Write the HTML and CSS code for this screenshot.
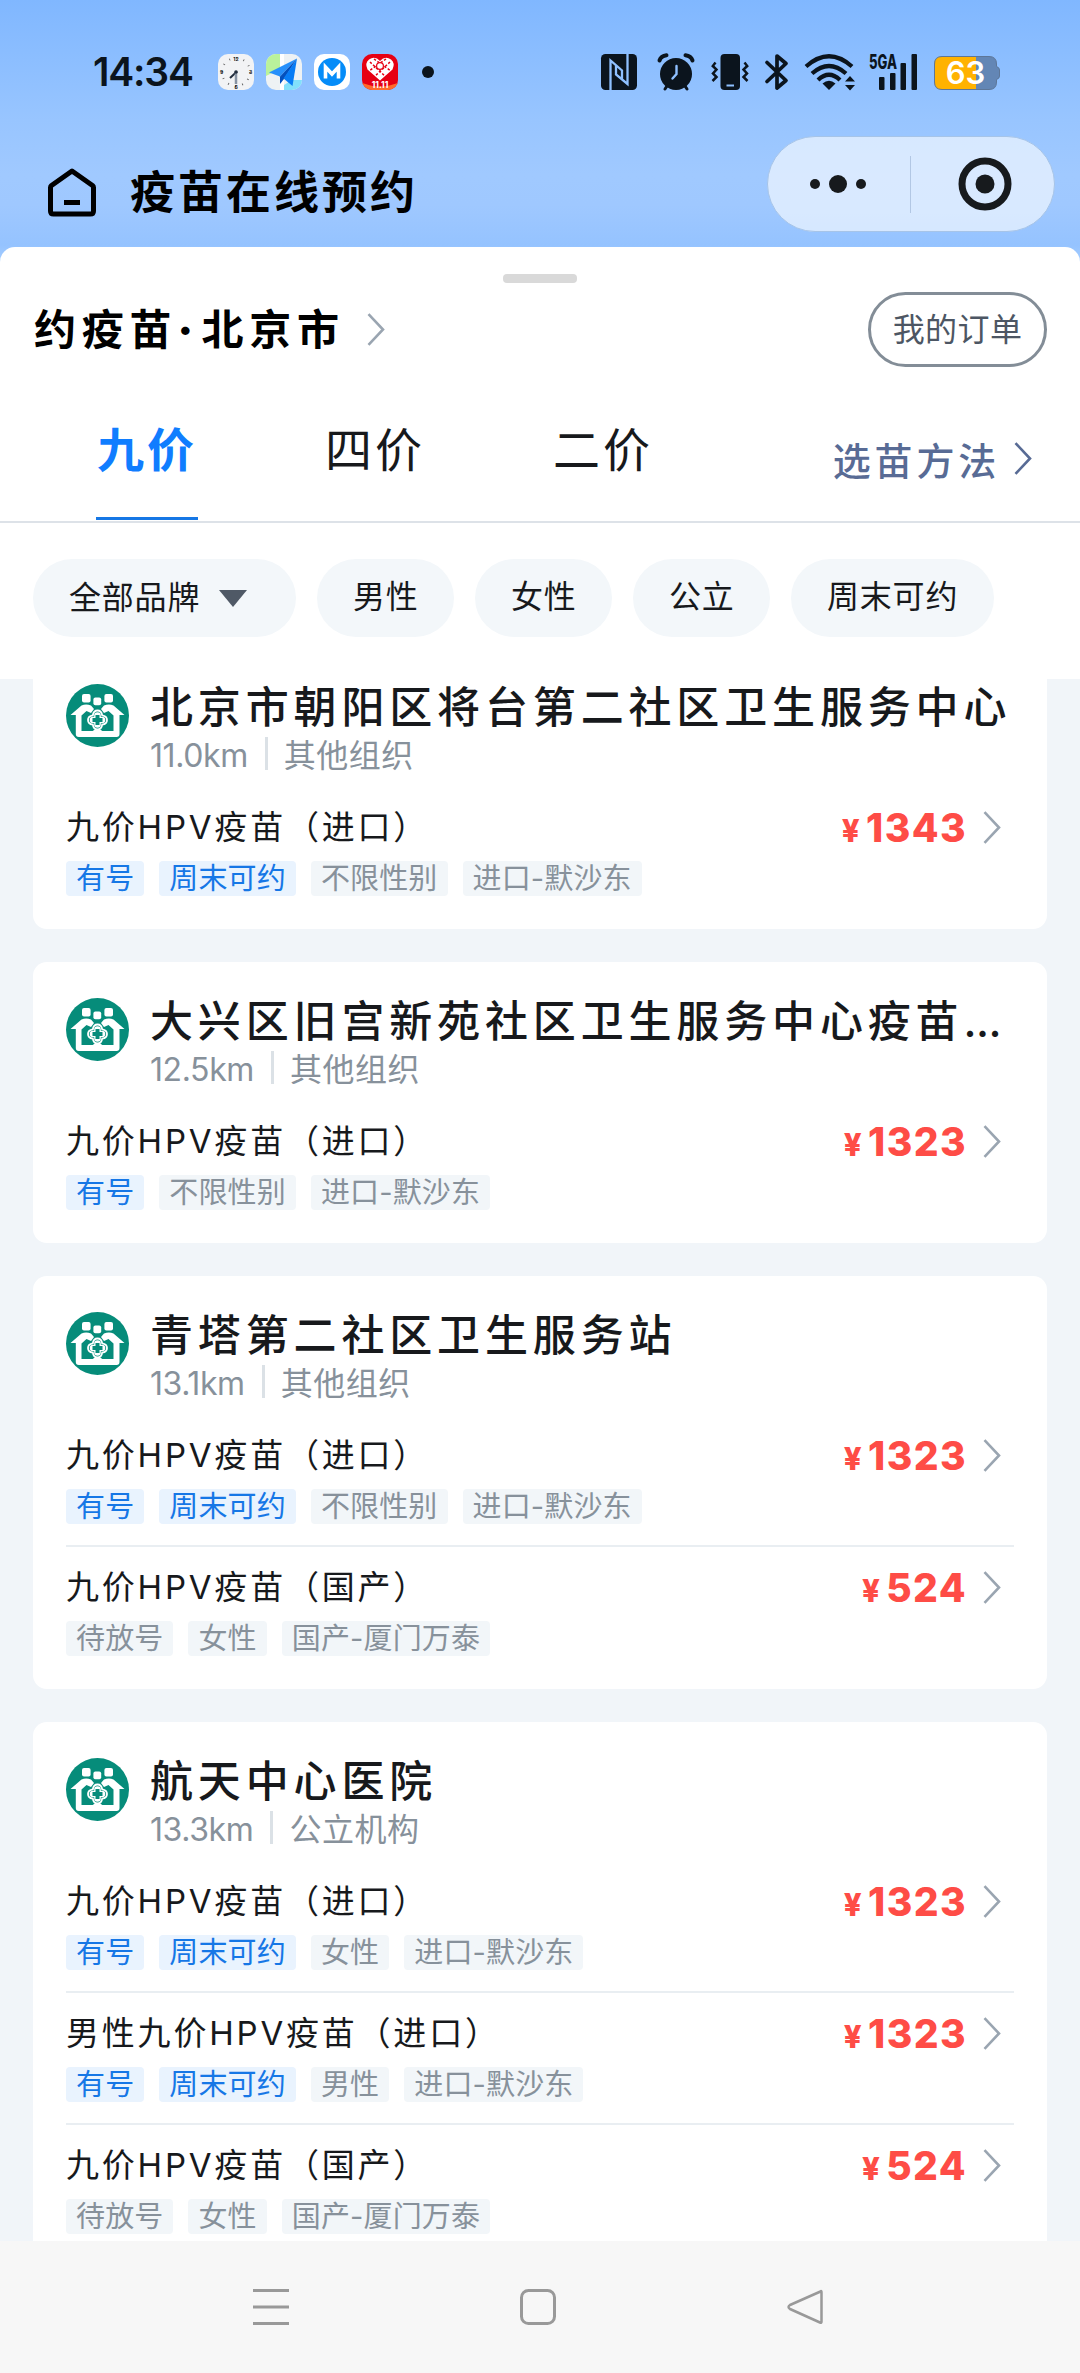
FILE: index.html
```html
<!DOCTYPE html>
<html lang="zh-CN">
<head>
<meta charset="utf-8">
<title>疫苗在线预约</title>
<link rel="stylesheet" href="styles.css">
</head>
<body>
<svg class="defs" width="0" height="0">
  <symbol id="chev" viewBox="0 0 18 33"><path d="M1.5 1.2 L16 16.5 L1.5 31.8" fill="none" stroke="currentColor" stroke-width="2.6"/></symbol>
  <symbol id="clinic" viewBox="0 0 63 63">
    <circle cx="31.5" cy="31.5" r="31.5" fill="#068c7a"/>
    <g fill="#fff">
      <rect x="16" y="10" width="8.6" height="8.6" rx="2"/>
      <rect x="27.4" y="13.500" width="7.8" height="7.8" rx="2"/>
      <rect x="38.4" y="10" width="8.6" height="8.6" rx="2"/>
      <path d="M4.5 31 L15.5 21.500 Q20 19.500 25 21.500 L28 25 L25 29 L20.500 27 L15.500 31.500 V47 H47.500 V31.500 L42.500 27 L38 29 L35 25 L38 21.500 Q43 19.500 47.500 21.500 L58.5 31 H53.500 V50 Q53.5 53 50.5 53 H12.8 Q9.8 53 9.8 50 V31 Z"/>
      <path d="M26 47.500 L31.500 43.500 L37 47.500 Z"/>
    </g>
    <path d="M31.5 26.500 Q35.500 26.500 36.200 31.300 Q41 32 41 36 Q41 40 36.200 40.700 Q35.500 45.500 31.5 45.500 Q27.500 45.500 26.800 40.700 Q22 40 22 36 Q22 32 26.800 31.300 Q27.500 26.500 31.500 26.500 Z" fill="#068c7a" stroke="#fff" stroke-width="1.800"/>
    <path d="M31.500 31.500 V40.500 M27 36 H36" stroke="#fff" stroke-width="6.600" stroke-linecap="round"/>
    <path d="M31.500 31 V41 M26.500 36 H36.500" stroke="#068c7a" stroke-width="4"/>
  </symbol>
</svg>

<header class="top">
  <div class="status">
    <span class="clock">14:34</span>
    <div class="apps">
      <svg width="36" height="36" viewBox="0 0 36 36">
        <rect width="36" height="36" rx="10" fill="#f2f3f5"/>
        <circle cx="18" cy="18" r="14" fill="none" stroke="#555" stroke-width="2" stroke-dasharray=".8 6.530"/>
        <g class="dial"><text x="18" y="6.500">12</text><text x="32.500" y="20">3</text><text x="3.500" y="20">9</text><text x="18" y="34.500">6</text></g>
        <path d="M19 17.500 L12 24" stroke="#222d3d" stroke-width="2"/><path d="M18 18 V30" stroke="#8793a3" stroke-width="2.500"/><circle cx="18" cy="18" r="1.800" fill="#222d3d"/>
      </svg>
      <svg width="36" height="36" viewBox="0 0 36 36">
        <clipPath id="mapclip"><rect width="36" height="36" rx="10"/></clipPath>
        <g clip-path="url(#mapclip)">
          <rect width="36" height="36" fill="#eef2f4"/>
          <path d="M0 0 H14 V15 L0 22 Z" fill="#baf29b"/><path d="M26 26 H36 V36 H18 V31 Z" fill="#82e0fb"/>
          <path d="M16 0 V36" stroke="#fff" stroke-width="4"/>
          <path d="M31 4.500 L3 18.500 L14 22.500 Z" fill="#2790fb"/><path d="M31 4.500 L14 22.500 V30 L18 25 Z" fill="#0450bd"/><path d="M31 4.500 L17.500 24.500 L26.500 32 Z" fill="#087cf5"/>
        </g>
      </svg>
      <svg width="36" height="36" viewBox="0 0 36 36">
        <rect width="36" height="36" rx="10" fill="#fff"/><circle cx="18" cy="18" r="14" fill="#058cf8"/>
        <path d="M11.500 24.500 V13 L18 20 L24.500 13 V24.500" fill="none" stroke="#fff" stroke-width="3.600"/>
      </svg>
      <svg width="36" height="36" viewBox="0 0 36 36">
        <clipPath id="saleclip"><rect width="36" height="36" rx="10"/></clipPath>
        <g clip-path="url(#saleclip)">
          <rect width="36" height="36" fill="#e60012"/><path d="M0 29 Q18 36 36 29 V36 H0 Z" fill="#ff6a2a"/>
          <path d="M18 26.500 L5.500 15.500 Q2.500 9 7 5.500 Q13 1.500 18 7 Q23 1.500 29 5.500 Q33.500 9 30.500 15.500 Z" fill="#fff"/>
          <path d="M8 8 L25 24 M12 5 L29 17 M28 8 L11 24 M24 5 L7 17" stroke="#e60012" stroke-width="1.500" stroke-dasharray="2.400 1.800"/>
          <circle cx="18" cy="12" r="3.400" fill="#fff" stroke="#e60012" stroke-width="1.200"/>
        </g>
        <text class="sale" x="18" y="34">11.11</text>
      </svg>
    </div>
    <i class="more"></i>
    <div class="signals">
      <svg class="nfc" width="36" height="36" viewBox="0 0 36 36"><rect width="36" height="36" rx="4.500" fill="#0b141d"/><path d="M9.500 36 V6.500 L21 16.500 V25 M26.500 0 V30 L15 20.500 V11.500" fill="none" stroke="#8fc0ff" stroke-width="2.300"/></svg>
      <svg class="alarm" width="38" height="38" viewBox="0 0 38 38"><g fill="none" stroke="#0b141d" stroke-width="4" stroke-linecap="round"><path d="M2.500 7.500 Q4 3 9.500 2.300 M35.500 7.500 Q34 3 28.500 2.300"/><path d="M10 33 L8 36 M28 33 L30 36" stroke-width="3"/></g><circle cx="19" cy="21" r="16" fill="#0b141d"/><path d="M19.500 13 V21 L15.500 25.500" fill="none" stroke="#8fc0ff" stroke-width="2.400" stroke-linecap="round"/></svg>
      <svg class="vibe" width="38" height="36" viewBox="0 0 38 36"><rect x="9.500" width="19.500" height="36" rx="4" fill="#0b141d"/><path d="M15.500 31.500 H23" stroke="#8fc0ff" stroke-width="2"/><path d="M4.500 8.500 L1.800 12 L5.500 15.500 L2 19.500 L5.500 23 L1.500 27 M33.500 8.500 L36.200 12 L32.500 15.500 L36 19.500 L32.500 23 L36.500 27" fill="none" stroke="#0b141d" stroke-width="2.500"/></svg>
      <svg class="bt" width="24" height="38" viewBox="0 0 24 38"><path d="M2 9.500 L21 27.500 L12 35 V3 L21 10.500 L2 28.500" fill="none" stroke="#0b141d" stroke-width="3.700" stroke-linejoin="round" stroke-linecap="round"/></svg>
      <svg class="wifi" width="52" height="37" viewBox="0 0 52 37"><g fill="none" stroke="#0b141d" stroke-width="4.200"><path d="M2 12.500 Q25 -8 48 12.500"/><path d="M8 19.500 Q25 4.500 42 19.500"/><path d="M14 26 Q25 15.500 36 26"/></g><path d="M18.500 29.500 Q25 24 31.500 29.500 L25 36 Z" fill="#0b141d"/><path d="M41 27.500 L46 22 L51 27.500 Z M41 31 H51 L46 36.500 Z" fill="#0b141d"/></svg>
      <svg class="cell" width="49" height="38" viewBox="0 0 49 38"><text class="net" x="0" y="16" textLength="28" lengthAdjust="spacingAndGlyphs">5GA</text><g fill="#0b141d"><rect x="10" y="24" width="5.500" height="13" rx="1"/><rect x="21" y="20" width="5.500" height="17" rx="1"/><rect x="31.500" y="10" width="5.500" height="27" rx="1"/><rect x="42.500" y="1" width="5.500" height="36" rx="1"/></g></svg>
      <svg class="batt" width="66" height="34" viewBox="0 0 66 34"><clipPath id="bclip"><path d="M8 .5 H55 Q62.500 .5 62.500 8 V10.500 Q65.500 11.500 65.500 14 V20 Q65.500 22.500 62.500 23.500 V26 Q62.500 33.500 55 33.500 H8 Q.5 33.500 .5 26 V8 Q.5 .5 8 .5 Z"/></clipPath><g clip-path="url(#bclip)"><rect width="66" height="34" fill="#6386b5"/><rect width="42" height="34" fill="#ffb200"/></g><path d="M8 .5 H55 Q62.500 .5 62.500 8 V10.500 Q65.500 11.500 65.500 14 V20 Q65.500 22.500 62.500 23.500 V26 Q62.500 33.500 55 33.500 H8 Q.5 33.500 .5 26 V8 Q.5 .5 8 .5 Z" fill="none" stroke="#5d7698" stroke-width="1"/><text class="pct" x="31.500" y="28">63</text></svg>
    </div>
  </div>
  <div class="nav">
    <svg class="home" width="48" height="49" viewBox="0 0 48 49"><path d="M24 3 L44.500 17.500 Q45.500 18.300 45.500 19.500 V43 Q45.500 46 42.500 46 H5.500 Q2.500 46 2.500 43 V19.500 Q2.500 18.300 3.500 17.500 Z" fill="none" stroke="#000" stroke-width="5" stroke-linejoin="round"/><path d="M16 34.500 H32" stroke="#000" stroke-width="5"/></svg>
    <h1>疫苗在线预约</h1>
    <div class="capsule">
      <svg width="56" height="22" viewBox="0 0 56 22" fill="#171a1d"><circle cx="5" cy="11" r="5"/><circle cx="28" cy="11" r="9"/><circle cx="51" cy="11" r="5"/></svg>
      <i></i>
      <svg width="54" height="54" viewBox="0 0 54 54"><circle cx="27" cy="27" r="23" fill="none" stroke="#171a1d" stroke-width="7"/><circle cx="27" cy="27" r="9.500" fill="#171a1d"/></svg>
    </div>
  </div>
</header>

<main class="sheet">
  <div class="handle"></div>
  <div class="city">
    <h2><span>约疫苗</span><b>·</b><span>北京市</span></h2>
    <svg class="chev"><use href="#chev"/></svg>
    <span class="orders">我的订单</span>
  </div>
  <div class="tabs">
    <span class="tab on">九价</span><span class="tab">四价</span><span class="tab">二价</span>
    <span class="how">选苗方法<svg class="chev"><use href="#chev"/></svg></span>
  </div>
  <div class="chips">
    <span class="brand">全部品牌<i></i></span><span>男性</span><span>女性</span><span>公立</span><span>周末可约</span>
  </div>
  <div class="list">
    <section class="card">
      <div class="org"><svg class="logo"><use href="#clinic"/></svg><div><h3>北京市朝阳区将台第二社区卫生服务中心</h3><p><span>11.0km</span><i></i>其他组织</p></div></div>
      <div class="item"><div class="line"><span class="name">九价HPV疫苗（进口）</span><span class="price"><small>¥</small>1343</span><svg class="chev"><use href="#chev"/></svg></div><div class="tags"><b>有号</b><b>周末可约</b><span>不限性别</span><span>进口-默沙东</span></div></div>
    </section>
    <section class="card">
      <div class="org"><svg class="logo"><use href="#clinic"/></svg><div><h3>大兴区旧宫新苑社区卫生服务中心疫苗<span class="dots">...</span></h3><p><span>12.5km</span><i></i>其他组织</p></div></div>
      <div class="item"><div class="line"><span class="name">九价HPV疫苗（进口）</span><span class="price"><small>¥</small>1323</span><svg class="chev"><use href="#chev"/></svg></div><div class="tags"><b>有号</b><span>不限性别</span><span>进口-默沙东</span></div></div>
    </section>
    <section class="card">
      <div class="org"><svg class="logo"><use href="#clinic"/></svg><div><h3>青塔第二社区卫生服务站</h3><p><span>13.1km</span><i></i>其他组织</p></div></div>
      <div class="item"><div class="line"><span class="name">九价HPV疫苗（进口）</span><span class="price"><small>¥</small>1323</span><svg class="chev"><use href="#chev"/></svg></div><div class="tags"><b>有号</b><b>周末可约</b><span>不限性别</span><span>进口-默沙东</span></div></div>
      <div class="item"><div class="line"><span class="name">九价HPV疫苗（国产）</span><span class="price"><small>¥</small>524</span><svg class="chev"><use href="#chev"/></svg></div><div class="tags"><span>待放号</span><span>女性</span><span>国产-厦门万泰</span></div></div>
    </section>
    <section class="card">
      <div class="org"><svg class="logo"><use href="#clinic"/></svg><div><h3>航天中心医院</h3><p><span>13.3km</span><i></i>公立机构</p></div></div>
      <div class="item"><div class="line"><span class="name">九价HPV疫苗（进口）</span><span class="price"><small>¥</small>1323</span><svg class="chev"><use href="#chev"/></svg></div><div class="tags"><b>有号</b><b>周末可约</b><span>女性</span><span>进口-默沙东</span></div></div>
      <div class="item"><div class="line"><span class="name">男性九价HPV疫苗（进口）</span><span class="price"><small>¥</small>1323</span><svg class="chev"><use href="#chev"/></svg></div><div class="tags"><b>有号</b><b>周末可约</b><span>男性</span><span>进口-默沙东</span></div></div>
      <div class="item"><div class="line"><span class="name">九价HPV疫苗（国产）</span><span class="price"><small>¥</small>524</span><svg class="chev"><use href="#chev"/></svg></div><div class="tags"><span>待放号</span><span>女性</span><span>国产-厦门万泰</span></div></div>
    </section>
  </div>
</main>

<footer class="keys">
  <svg width="36" height="36" viewBox="0 0 36 36"><path d="M0 1.500 H36 M0 18 H36 M0 34.500 H36" stroke="#999" stroke-width="3"/></svg>
  <svg width="36" height="36" viewBox="0 0 36 36"><rect x="1.500" y="1.500" width="33" height="33" rx="7" fill="none" stroke="#999" stroke-width="3"/></svg>
  <svg width="36" height="36" viewBox="0 0 36 36"><path d="M33.500 2.500 Q34.500 1.500 34.500 3.500 V32.500 Q34.500 34.500 33 33.500 L3 20 Q0 18 3 16 Z" fill="none" stroke="#999" stroke-width="2.500" stroke-linejoin="round"/></svg>
</footer>
</body>
</html>
```
FILE: styles.css
```css
* { box-sizing: border-box; margin: 0; padding: 0; }
body {
  width: 1080px; height: 2373px; overflow: hidden;
  display: flex; flex-direction: column;
  font-family: Inter, "Noto Sans CJK SC", sans-serif;
  color: #17191c; white-space: nowrap;
  background: linear-gradient(#80b7ff 0, #98c5ff 120px, #a0c9ff 175px, #9fc8ff 205px, #95c3ff 245px, #a3ccff 260px);
}
i { font-style: normal; }
.defs { position: absolute; }
svg { display: block; flex: none; overflow: visible; }
.top { height: 247px; flex: none; }

.status { height: 54px; margin-top: 45px; padding-left: 93px; display: flex; align-items: center; }
.clock { width: 125px; font-size: 39px; line-height: 50px; font-weight: 600; letter-spacing: -1.2px; color: #0b141d; }
.apps { display: flex; gap: 12px; }
.dial text { font-size: 5px; font-weight: 700; text-anchor: middle; fill: #111; }
.sale { font-size: 8.5px; font-weight: 700; text-anchor: middle; fill: #fff; }
.more { width: 12px; height: 12px; margin-left: 24px; border-radius: 50%; background: #0b141d; }
.signals { display: flex; align-items: center; margin-left: 167px; }
.alarm { margin-left: 20px; }
.vibe { margin-left: 16px; }
.bt { margin-left: 16px; }
.wifi { margin-left: 15px; }
.cell { margin-left: 13px; }
.batt { margin-left: 16px; margin-top: 2px; }
.net { font-size: 20px; font-weight: 800; fill: #0b141d; }
.pct { font-size: 31px; font-weight: 600; text-anchor: middle; fill: #fff; }

.nav { display: flex; align-items: center; margin-top: 37px; height: 96px; padding: 0 25px 0 48px; }
.home { margin-top: 17px; }
.nav h1 { margin: 17px 0 0 34px; font-size: 45px; line-height: 56px; letter-spacing: 3px; font-weight: 700; color: #000; }
.capsule {
  width: 288px; height: 96px; margin-left: auto; padding-left: 42px;
  display: flex; align-items: center; border-radius: 48px;
  background: rgba(255,255,255,.6); border: 1px solid #a6c4e8;
}
.capsule i { flex: none; width: 1px; height: 57px; margin: 0 47px 0 44px; background: #b2c7e4; }

.sheet { flex: 1; min-height: 0; display: flex; flex-direction: column; background: #fff; border-radius: 15px 15px 0 0; }
.handle { flex: none; width: 74px; height: 9px; margin: 27px 0 0 503px; border-radius: 4px; background: #d9d9d9; }
.city { flex: none; display: flex; align-items: center; height: 75px; margin: 9px 33px 0 34px; }
.city h2 { display: flex; font-size: 42px; letter-spacing: 5.8px; line-height: 56px; color: #000; }
.city b { width: 24px; margin-left: -4px; margin-right: 4px; text-align: center; letter-spacing: 0; }
.chev { width: 18px; height: 33px; color: #9aa5b1; }
.city .chev { margin-left: 22px; }
.orders {
  margin-left: auto; width: 179px; height: 75px; border: 3px solid #838d97; border-radius: 38px;
  font-size: 32px; line-height: 69px; letter-spacing: .4px; text-align: center; color: #4d5663;
}
.tabs { flex: none; display: flex; height: 156px; padding-left: 96px; border-bottom: 2px solid #dde2e8; }
.tab { width: 102px; height: 153px; margin-right: 126px; padding-top: 51px; font-size: 47px; line-height: 64px; letter-spacing: 3px; padding-left: 1px; }
.tab.on { color: #107dff; font-weight: 700; border-bottom: 3px solid #1677e5; }
.how { margin-left: auto; height: 50px; margin-top: 66px; padding-right: 48px; display: flex; align-items: center; font-size: 38px; letter-spacing: 3.8px; font-weight: 500; color: #586b95; }
.how .chev { margin-left: 14px; color: #586b95; }
.chips { flex: none; display: flex; gap: 21px; height: 156px; padding: 36px 33px 0; }
.chips span { height: 78px; padding: 0 36px; border-radius: 39px; background: #f3f7fa; font-size: 32px; line-height: 76px; letter-spacing: .8px; }
.chips span + span { width: 137px; }
.chips span:last-child { width: 203px; }
.chips .brand { display: flex; align-items: center; width: 263px; }
.brand i { margin-left: 19px; border: 14px solid transparent; border-top: 17px solid #4f5966; border-bottom: 0; }

.list { flex: 1; min-height: 0; overflow: hidden; padding: 0 33px; background: #f1f5f9; }
.card { margin-bottom: 33px; padding: 36px 33px 33px; background: #fff; border-radius: 14px; }
.card:first-child { margin-top: -31px; }
.org { display: flex; gap: 21px; height: 87px; margin-bottom: 14px; }
.logo { width: 63px; height: 63px; }
.org h3 { font-size: 43px; line-height: 47px; height: 46px; letter-spacing: 4.85px; font-weight: 500; }
.dots { letter-spacing: -.5px; }
.org p { display: flex; margin-top: 7px; font-size: 32px; line-height: 37px; height: 34px; letter-spacing: .5px; color: #87919b; }
.org p span { letter-spacing: -.4px; }
.org p i { width: 3px; height: 33px; margin: 0 16px 0 17px; background: #dbe1e6; }
.item { border-top: 2px solid #e9eef2; padding: 18px 0 21px; }
.org + .item { border-color: transparent; }
.item:last-child { padding-bottom: 0; }
.line { display: flex; align-items: center; height: 45px; padding-right: 13px; }
.name { font-size: 33px; line-height: 45px; letter-spacing: 2.8px; }
.price { margin-left: auto; font-size: 39px; line-height: 45px; padding-top: 3px; font-weight: 800; letter-spacing: 1.4px; color: #fe4c46; }
.price small { font-size: 31px; margin-right: 5px; }
.line .chev { margin-left: 16px; }
.tags { display: flex; gap: 15px; margin-top: 11px; }
.tags b, .tags span { height: 35px; padding: 0 10px; border-radius: 4px; font-size: 29px; line-height: 35px; letter-spacing: .15px; font-weight: 400; }
.tags b { color: #1677e6; background: #e9f3fe; }
.tags span { color: #87919b; background: #f2f6f9; }

.keys { flex: none; height: 132px; padding: 48px 257px 0 253px; display: flex; justify-content: space-between; background: #f7f7f7; }
```
